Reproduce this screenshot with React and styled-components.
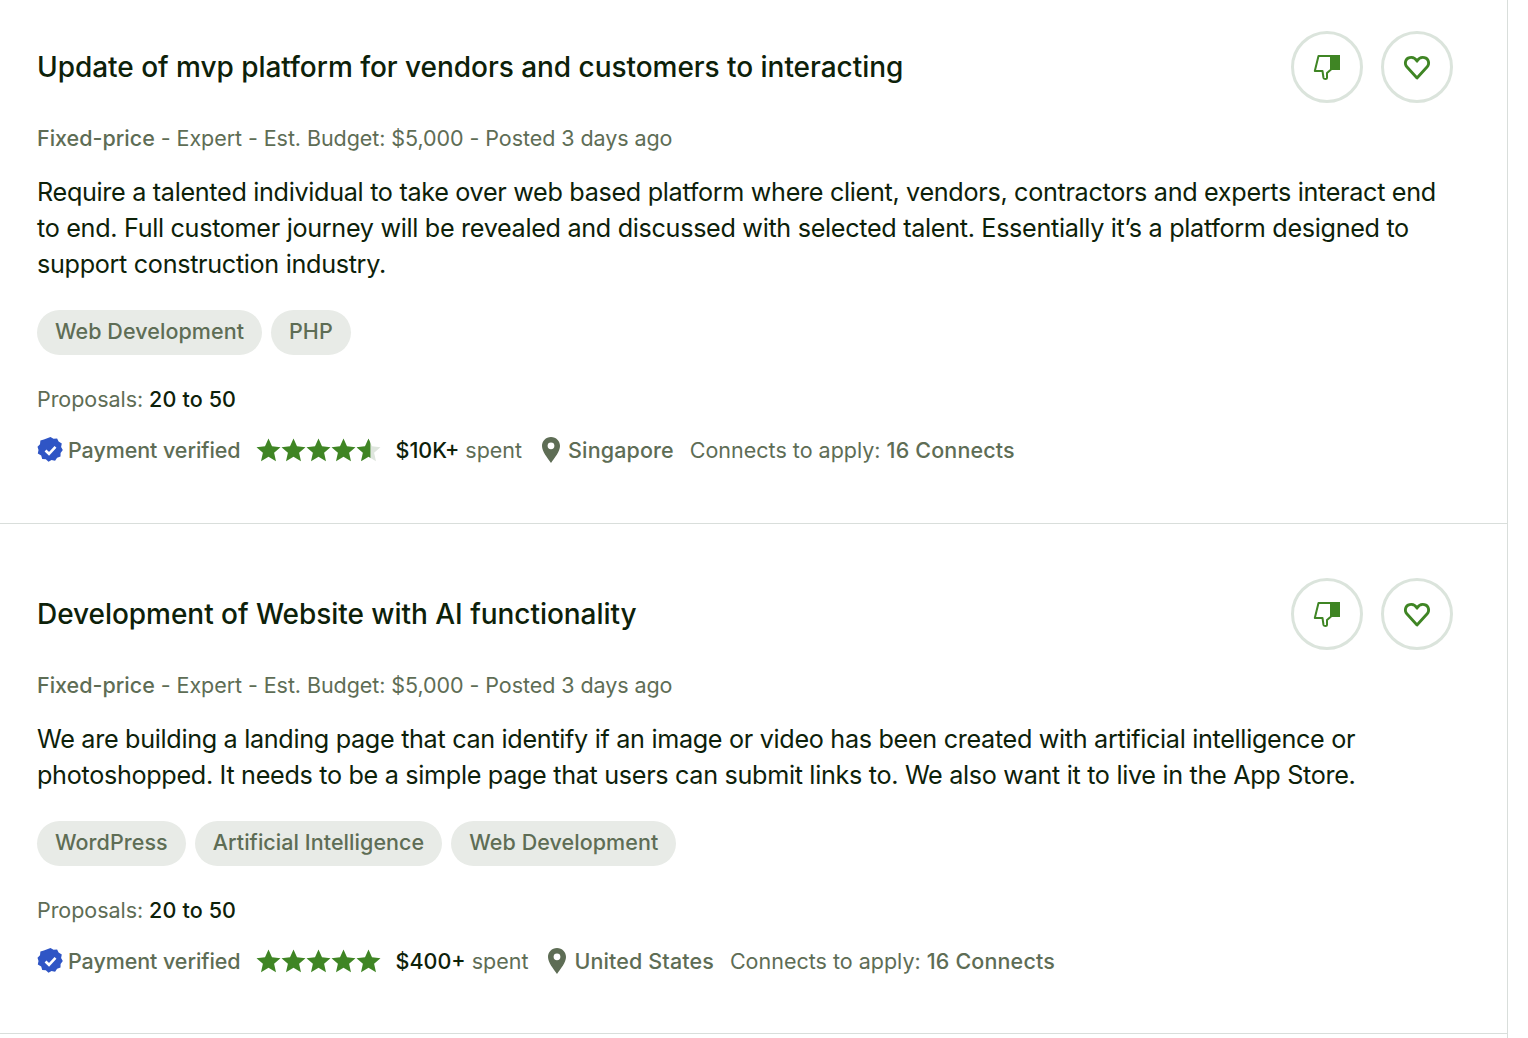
import React from "react";
import styled, { createGlobalStyle } from "styled-components";

const Global = createGlobalStyle`
  html, body { margin: 0; padding: 0; background: #fff; }
  body { font-family: Inter, "Noto Sans", sans-serif; -webkit-font-smoothing: antialiased; }
`;
const Page = styled.div`
  width: 1508px; height: 1038px; box-sizing: border-box; overflow: hidden;
  border-right: 1px solid #d9dedb;
`;
const Card = styled.article`
  box-sizing: border-box; height: ${p => p.$h}px; padding: ${p => p.$top}px 54px 0 37px;
  border-bottom: 1px solid #d9dedb;
`;
const Head = styled.header`
  display: flex; justify-content: space-between; align-items: flex-start; height: 72px;
`;
const Title = styled.h2`
  margin: 0; line-height: 72px;
  font-size: 28px; font-weight: 500; color: #0d2109; letter-spacing: -0.04px;
`;
const Actions = styled.div`display: flex; gap: 18px;`;
const RoundBtn = styled.button`
  width: 72px; height: 72px; box-sizing: border-box; border-radius: 50%;
  border: 3px solid #dbe4dc; background: #fff; padding: 0;
  display: flex; align-items: center; justify-content: center;
`;
const Meta = styled.div`
  margin-top: 21px; font-size: 21.5px; line-height: 28px; color: #5e6d55; letter-spacing: -0.07px;
  b { font-weight: 500; letter-spacing: 0; }
`;
const Desc = styled.p`
  margin: 22px 0 0; font-size: 25.2px; line-height: 36px; color: #0d2109; letter-spacing: -0.32px;
  width: 1416px;
`;
const Chips = styled.div`display: flex; gap: 9px; margin-top: 28px;`;
const Chip = styled.span`
  height: 45px; line-height: 43px; padding: 0 18px; border-radius: 23px; background: #e8ebe7;
  color: #5e6d55; font-size: 21.5px; font-weight: 500; letter-spacing: 0.06px;
`;
const Proposals = styled.div`
  margin-top: 30px; font-size: 21.5px; line-height: 28px; color: #5e6d55; letter-spacing: -0.05px;
  b { font-weight: 500; color: #0d2109; letter-spacing: 0.15px; }
`;
const Stats = styled.div`
  margin-top: 23px; height: 28px; display: flex; align-items: center; font-size: 21.5px; color: #5e6d55; letter-spacing: -0.08px;
`;
const Verified = styled.span`display: flex; align-items: center; gap: 4px; font-weight: 500; margin-right: 15px;`;
const Stars = styled.span`display: flex; margin-right: 15px; width: 125px;`;
const Spent = styled.span`margin-right: 19px; letter-spacing: 0; b { font-weight: 500; color: #0d2109; }`;
const Place = styled.span`display: flex; align-items: center; gap: 7px; font-weight: 500; margin-right: 16px; letter-spacing: 0.12px;`;
const Connects = styled.span`letter-spacing: 0; b { font-weight: 500; letter-spacing: 0.15px; }`;

const ThumbDown = () => (
  <svg width="28" height="28" viewBox="0 0 28 28" fill="none">
    <path d="M5.500 3H18V16.500L14 20V25C14 26.400 11 26.400 10.500 25L9.500 18H1.800Z" stroke="#3f8524" strokeWidth="2" strokeLinejoin="round" />
    <rect x="18" y="2" width="9" height="15" fill="#3f8524" />
  </svg>
);
const Heart = () => (
  <svg width="28" height="28" viewBox="0 0 28 28" fill="none">
    <path d="M14 25L3.800 13.800C1.200 10.800 2.200 5.500 6.600 4.600C9.800 3.900 12.600 5.600 14 8.200C15.400 5.600 18.200 3.900 21.400 4.600C25.800 5.500 26.800 10.800 24.200 13.800Z" stroke="#3f8524" strokeWidth="2.800" strokeLinejoin="round" />
  </svg>
);
const Badge = () => (
  <svg width="27" height="28" viewBox="0 0 27 27">
    <path d="M13.500 .5l3 1.800 3.600-.3 1.500 3.100 3.200 1.800-.7 3.600 1.700 3-2.200 2.900-.1 3.600-3.400 1.200-2 3-3.600-.8-3 1.800-2.700-2.400-3.600-.4-1-3.500L.8 17l.7-3.500L.5 10.300l2.500-2.600.4-3.600 3.500-1z" fill="#2f55c5" />
    <path d="M8.500 14l3.500 3.300 6.500-7" fill="none" stroke="#fff" strokeWidth="2.600" />
  </svg>
);
const starPath = "M12.500 .5l3.500 7.800 8.500.9-6.400 5.600 1.900 8.400-7.500-4.400-7.500 4.400 1.900-8.400L.5 9.200 9 8.300z";
const Star = ({ half }) => (
  <svg width="25" height="25" viewBox="0 0 25 25">
    <path d={starPath} fill={half ? "#dfe6de" : "#3f8524"} />
    {half && <path d={starPath} fill="#3f8524" style={{ clipPath: "inset(0 42% 0 0)" }} />}
  </svg>
);
const Pin = () => (
  <svg width="20" height="28" viewBox="0 0 20 28">
    <path fillRule="evenodd" d="M10 1C4.800 1 1 5 1 10c0 5.500 5.500 12 9 17 3.500-5 9-11.500 9-17 0-5-3.800-9-9-9zm0 12.200a3.400 3.400 0 1 1 0-6.800 3.400 3.400 0 0 1 0 6.800z" fill="#5e6d55" />
  </svg>
);

const jobs = [
  {
    title: "Update of mvp platform for vendors and customers to interacting",
    desc: "Require a talented individual to take over web based platform where client, vendors, contractors and experts interact end to end. Full customer journey will be revealed and discussed with selected talent. Essentially it’s a platform designed to support construction industry.",
    tags: ["Web Development", "PHP"], half: true, spent: "$10K+", place: "Singapore", h: 524, top: 31,
  },
  {
    title: "Development of Website with AI functionality",
    desc: "We are building a landing page that can identify if an image or video has been created with artificial intelligence or photoshopped. It needs to be a simple page that users can submit links to. We also want it to live in the App Store.",
    tags: ["WordPress", "Artificial Intelligence", "Web Development"], half: false, spent: "$400+", place: "United States", h: 510, top: 54,
  },
];

export default function App() {
  return (
    <Page>
      <Global />
      {jobs.map(j => (
        <Card key={j.title} $h={j.h} $top={j.top}>
          <Head>
            <Title>{j.title}</Title>
            <Actions>
              <RoundBtn aria-label="Not interested"><ThumbDown /></RoundBtn>
              <RoundBtn aria-label="Save job"><Heart /></RoundBtn>
            </Actions>
          </Head>
          <Meta><b>Fixed-price</b> - Expert - Est. Budget: $5,000 - Posted 3 days ago</Meta>
          <Desc>{j.desc}</Desc>
          <Chips>{j.tags.map(t => <Chip key={t}>{t}</Chip>)}</Chips>
          <Proposals>Proposals: <b>20 to 50</b></Proposals>
          <Stats>
            <Verified><Badge />Payment verified</Verified>
            <Stars>{[0, 1, 2, 3, 4].map(i => <Star key={i} half={j.half && i === 4} />)}</Stars>
            <Spent><b>{j.spent}</b> spent</Spent>
            <Place><Pin />{j.place}</Place>
            <Connects>Connects to apply: <b>16 Connects</b></Connects>
          </Stats>
        </Card>
      ))}
    </Page>
  );
}
